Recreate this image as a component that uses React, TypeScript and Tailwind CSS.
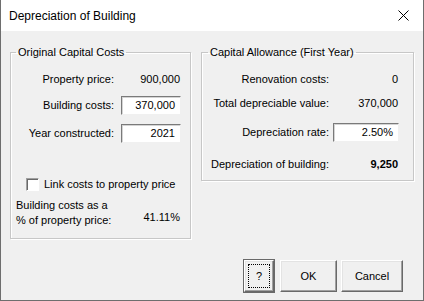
import React from "react";

const font = { fontFamily: '"Liberation Sans", Arial, sans-serif' };

function Field({ value, w }: { value: string; w: string }) {
  return (
    <div
      className={`${w} h-[19px] bg-white border border-t-[#7a7a7a] border-l-[#7a7a7a] border-b-[#f0f0f0] border-r-[#f0f0f0] shadow-[inset_1px_1px_0_#d4d4d4] flex items-center justify-end pr-[5px]`}
    >
      {value}
    </div>
  );
}

function Button({ label, w, focus }: { label: string; w: string; focus?: boolean }) {
  return (
    <button
      className={`${w} h-[32px] bg-[#f0f0f0] border border-t-white border-l-white border-b-[#696969] border-r-[#696969] shadow-[inset_-1px_-1px_0_#a0a0a0,inset_1px_1px_0_#e3e3e3] flex items-center justify-center ${focus ? "outline outline-1 outline-[#696969]" : ""}`}
    >
      {focus ? (
        <span className="w-[22px] h-[24px] border border-dotted border-black flex items-center justify-center">
          {label}
        </span>
      ) : (
        label
      )}
    </button>
  );
}

export default function App() {
  return (
    <div
      style={font}
      className="w-[424px] h-[301px] flex flex-col bg-[#f0f0f0] border-l border-r border-b border-[#6e6e6e] text-[11px] text-black whitespace-nowrap overflow-hidden"
    >
      {/* title bar */}
      <div className="h-[31px] bg-white flex items-center justify-between pl-[8px] pr-[14px] shrink-0">
        <span className="text-[12px]">Depreciation of Building</span>
        <svg width="11" height="11" viewBox="0 0 11 11">
          <path d="M0.5 0.5 L10.5 10.5 M10.5 0.5 L0.5 10.5" stroke="#000" strokeWidth="1" />
        </svg>
      </div>

      <div className="flex-1 flex flex-col">
        <div className="flex items-start gap-[10px] pl-[9px] pt-[14px]">
          {/* left group */}
          <fieldset className="w-[181px] h-[194px] border border-[#c7c7c7] shadow-[inset_1px_1px_0_#fff,1px_1px_0_#fff] px-[5px]">
            <legend className="px-[2px] text-[11px] leading-[14px]">Original Capital Costs</legend>
            <div className="grid grid-cols-[98px_60px] gap-x-[7px] items-center">
              <div className="h-[19px] mt-[11px] flex items-center justify-end">Property price:</div>
              <div className="h-[19px] mt-[11px] flex items-center justify-end pr-[1px]">900,000</div>
              <div className="h-[19px] mt-[7px] flex items-center justify-end">Building costs:</div>
              <div className="mt-[7px]">
                <Field value="370,000" w="w-[60px]" />
              </div>
              <div className="h-[19px] mt-[9px] flex items-center justify-end">Year constructed:</div>
              <div className="mt-[9px]">
                <Field value="2021" w="w-[60px]" />
              </div>
            </div>
            <div className="flex items-center gap-[5px] ml-[10px] mt-[33px]">
              <span className="w-[13px] h-[13px] bg-white border border-t-[#a0a0a0] border-l-[#a0a0a0] border-b-white border-r-white shadow-[inset_1px_1px_0_#696969]" />
              <span>Link costs to property price</span>
            </div>
            <div className="flex items-end justify-between mt-[5px] pr-[5px] leading-[15px]">
              <div>
                Building costs as a
                <br />% of property price:
              </div>
              <div className="pb-[3px]">41.11%</div>
            </div>
          </fieldset>

          {/* right group */}
          <fieldset className="w-[213px] h-[136px] border border-[#c7c7c7] shadow-[inset_1px_1px_0_#fff,1px_1px_0_#fff] px-[5px]">
            <legend className="ml-[1px] px-[2px] text-[11px] leading-[14px]">Capital Allowance (First Year)</legend>
            <div className="grid grid-cols-[122px_66px] gap-x-[4px] items-center">
              <div className="h-[19px] mt-[11px] flex items-center justify-end">Renovation costs:</div>
              <div className="h-[19px] mt-[11px] flex items-center justify-end pr-[1px]">0</div>
              <div className="h-[19px] mt-[5px] flex items-center justify-end">Total depreciable value:</div>
              <div className="h-[19px] mt-[5px] flex items-center justify-end pr-[1px]">370,000</div>
              <div className="h-[19px] mt-[10px] flex items-center justify-end">Depreciation rate:</div>
              <div className="mt-[10px]">
                <Field value="2.50%" w="w-[66px]" />
              </div>
              <div className="h-[19px] mt-[13px] flex items-center justify-end">Depreciation of building:</div>
              <div className="h-[19px] mt-[13px] flex items-center justify-end pr-[1px] font-bold">9,250</div>
            </div>
          </fieldset>
        </div>

        <div className="flex-1" />
        <div className="flex justify-end gap-[4px] pr-[20px] pb-[8px]">
          <div className="mr-[2px]">
            <Button label="?" w="w-[30px]" focus />
          </div>
          <Button label="OK" w="w-[57px]" />
          <Button label="Cancel" w="w-[62px]" />
        </div>
      </div>
    </div>
  );
}
